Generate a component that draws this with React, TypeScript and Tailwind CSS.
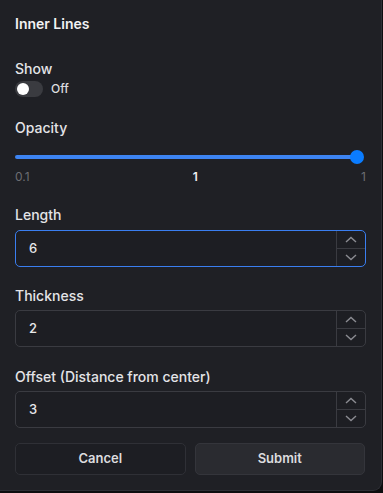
import React from "react";

function Stepper() {
  return (
    <div className="flex flex-col w-[29px] h-full border-l border-[#3a3b41]">
      <div className="flex-1 flex items-center justify-center border-b border-[#3a3b41]">
        <svg width="12" height="7" viewBox="0 0 12 7" fill="none">
          <path d="M1 6L6 1.5L11 6" stroke="#8b8c92" strokeWidth="1.4" />
        </svg>
      </div>
      <div className="flex-1 flex items-center justify-center">
        <svg width="12" height="7" viewBox="0 0 12 7" fill="none">
          <path d="M1 1L6 5.5L11 1" stroke="#8b8c92" strokeWidth="1.4" />
        </svg>
      </div>
    </div>
  );
}

function NumInput({ value, focused }: { value: string; focused?: boolean }) {
  return (
    <div
      className={
        focused
          ? "flex items-stretch h-[37px] rounded-[5px] border border-[#3a7ef0] bg-[#1d1e23]"
          : "flex items-stretch h-[37px] rounded-[5px] border border-[#3a3b41] bg-[#1d1e23]"
      }
    >
      <div className="flex-1 flex items-center pl-[13px] text-[13px] font-medium text-[#e8e8ea]">{value}</div>
      <Stepper />
    </div>
  );
}

export default function App() {
  return (
    <div className="w-[383px] h-[493px] bg-[#0d0d0f]" style={{ fontFamily: "Inter, 'Noto Sans', sans-serif" }}>
      <div className="w-[382px] h-[491px] bg-[#1f2025] border-r border-b border-[#2e2f35] rounded-br-[9px] px-[15px] pt-[14px] flex flex-col">
        <div className="text-[14px] leading-[20px] font-semibold text-[#f2f2f3]">Inner Lines</div>

        <div className="mt-[25px] text-[14px] leading-[20px] font-medium text-[#e4e4e7]">Show</div>
        <div className="mt-[2px] flex items-center gap-[8px] h-[16px]">
          <div className="w-[28px] h-[16px] rounded-full bg-[#3a3b40] flex items-center px-[2px]">
            <div className="w-[12px] h-[12px] rounded-full bg-white" />
          </div>
          <span className="text-[12px] leading-[16px] font-medium text-[#dcdcdf]">Off</span>
        </div>

        <div className="mt-[21px] text-[14px] leading-[20px] font-medium text-[#e4e4e7]">Opacity</div>
        <div className="mt-[12px] relative h-[14px] flex items-center">
          <div className="w-[342px] h-[4px] rounded-full bg-[#3d84f2]" />
          <div className="absolute left-[335px] top-0 w-[14px] h-[14px] rounded-full bg-[#0a7cff]" />
        </div>
        <div className="mt-[5px] flex justify-between text-[12px] leading-[16px]">
          <span className="text-[#6c6d73]">0.1</span>
          <span className="font-semibold text-[#f0f0f2]">1</span>
          <span className="text-[#6c6d73]">1</span>
        </div>

        <div className="mt-[20px] text-[14px] leading-[20px] font-medium text-[#e4e4e7]">Length</div>
        <div className="mt-[5px] w-[351px]">
          <NumInput value="6" focused />
        </div>

        <div className="mt-[19px] text-[14px] leading-[20px] font-medium text-[#e4e4e7]">Thickness</div>
        <div className="mt-[4px] w-[351px]">
          <NumInput value="2" />
        </div>

        <div className="mt-[20px] text-[14px] leading-[20px] font-medium text-[#e4e4e7]">Offset (Distance from center)</div>
        <div className="mt-[4px] w-[351px]">
          <NumInput value="3" />
        </div>

        <div className="mt-[15px] flex gap-[9px] w-[350px]">
          <button className="flex-1 h-[32px] rounded-[5px] border border-[#2f3036] bg-[#1d1e23] text-[13px] font-semibold text-[#dcdcdf]">
            Cancel
          </button>
          <button className="flex-1 h-[32px] rounded-[5px] border border-[#34353b] bg-[#2a2b30] text-[13px] font-semibold text-[#dcdcdf]">
            Submit
          </button>
        </div>
      </div>
    </div>
  );
}
